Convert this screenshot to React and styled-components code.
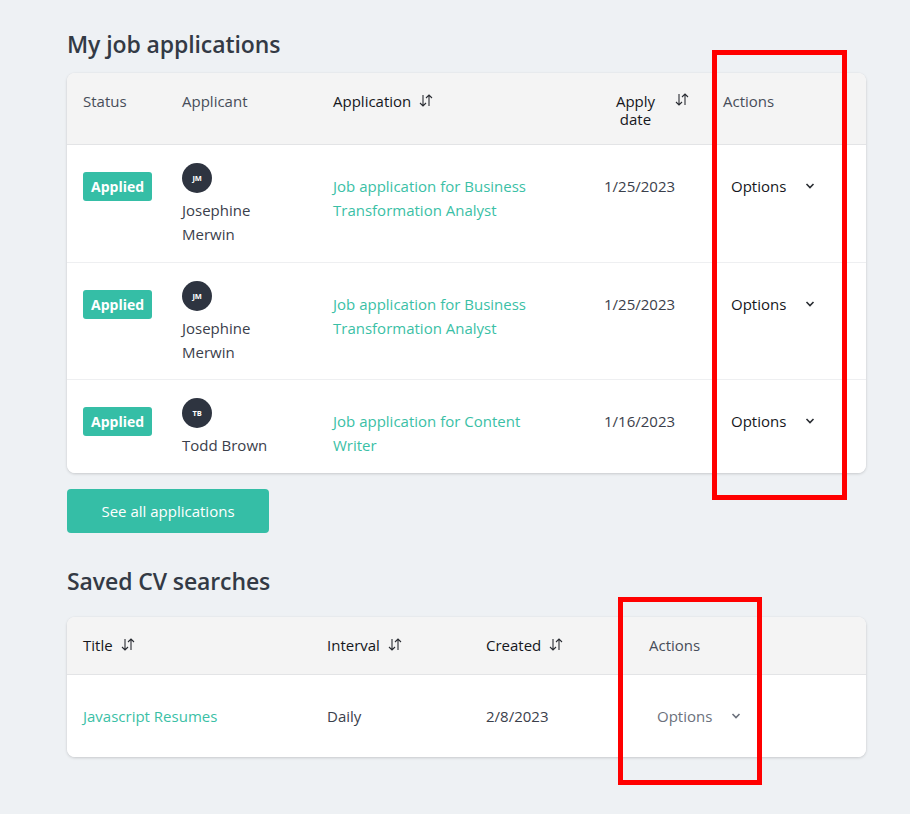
import React from "react";
import styled, { createGlobalStyle } from "styled-components";

const GlobalStyle = createGlobalStyle`
  html, body { margin: 0; padding: 0; background: #eef1f4; }
  body { font-family: "Open Sans", "Noto Sans", sans-serif; color: #3b404b; }
  * { box-sizing: border-box; }
`;

const Page = styled.div`
  position: relative;
  width: 910px;
  min-height: 814px;
  padding: 28px 0 0 67px;
`;

const Content = styled.div`
  width: 799px;
  display: flex;
  flex-direction: column;
`;

const Heading = styled.h2`
  margin: ${(p) => p.$mt || 0}px 0 ${(p) => p.$mb}px;
  font-size: 23px;
  line-height: 32px;
  font-weight: 600;
  color: #333a45;
  letter-spacing: -0.1px;
`;

const Card = styled.div`
  background: #fff;
  border-radius: 8px;
  box-shadow: 0 1px 3px rgba(0, 0, 0, 0.16), 0 0 1px rgba(0, 0, 0, 0.08);
  overflow: hidden;
`;

const Row = styled.div`
  display: grid;
  grid-template-columns: ${(p) => p.$cols};
  align-items: start;
  padding: ${(p) => p.$pad};
  background: ${(p) => (p.$head ? "#f4f4f4" : "#fff")};
  border-bottom: ${(p) => (p.$last ? "none" : `1px solid ${p.$head ? "#e3e4e6" : "#eeeff1"}`)};
`;

const Cell = styled.div`
  padding-left: 16px;
  margin-top: ${(p) => p.$mt || 0}px;
  font-size: 15px;
  line-height: 24px;
  display: flex;
  flex-direction: ${(p) => (p.$col ? "column" : "row")};
  align-items: flex-start;
`;

const HeadLabel = styled.span`
  font-size: 15px;
  line-height: 24px;
  color: ${(p) => (p.$dark ? "#15171c" : "#474d59")};
`;

const DateLabel = styled.span`
  width: 63px;
  text-align: center;
  font-size: 15px;
  line-height: 18px;
  margin-top: 3px;
  color: #15171c;
`;

const SortBox = styled.span`
  display: inline-flex;
  margin-left: ${(p) => p.$ml ?? 8}px;
  margin-top: ${(p) => p.$mt ?? 5}px;
  color: #2a2d33;
`;

const Badge = styled.span`
  display: inline-block;
  background: #35bea6;
  color: #fff;
  font-weight: 700;
  font-size: 14px;
  line-height: 29px;
  height: 29px;
  padding: 0 8px;
  border-radius: 3px;
`;

const Avatar = styled.span`
  width: 30px;
  height: 30px;
  border-radius: 50%;
  background: #2e3440;
  color: #fff;
  font-size: 7.5px;
  font-weight: 700;
  display: flex;
  align-items: center;
  justify-content: center;
  letter-spacing: -0.3px;
`;

const Name = styled.span`
  margin-top: 5px;
  color: #3b404b;
`;

const Link = styled.a`
  color: #3bbfa6;
  text-decoration: none;
`;

const Plain = styled.span`
  color: ${(p) => p.$c || "#3b404b"};
`;

const Options = styled.button`
  border: none;
  background: none;
  padding: 0 0 0 8px;
  font: inherit;
  font-size: 15px;
  line-height: 24px;
  color: ${(p) => (p.$muted ? "#6c717c" : "#15171c")};
  display: inline-flex;
  align-items: center;
  gap: 19px;
  cursor: pointer;
`;

const Button = styled.button`
  align-self: flex-start;
  margin-top: 16px;
  height: 44px;
  width: 202px;
  border: none;
  border-radius: 4px;
  background: #35bea6;
  color: #fff;
  font-family: inherit;
  font-size: 15px;
`;

const RedBox = styled.div`
  position: absolute;
  border: 5px solid #ff0000;
  pointer-events: none;
`;

const SortIcon = () => (
  <svg width="14" height="13" viewBox="0 0 14 13" fill="none" stroke="currentColor" strokeWidth="1.1">
    <path d="M4 1v11M1 9l3 3 3-3" />
    <path d="M10 12V1M7 4l3-3 3 3" />
  </svg>
);

const Chevron = ({ color }) => (
  <svg width="10" height="6" viewBox="0 0 10 6" fill="none" stroke={color} strokeWidth="1.6">
    <path d="M1.5 1l3.5 3.5L8.5 1" />
  </svg>
);

const jobCols = "99px 151px 271px 119px 1fr";
const apps = [
  { initials: "JM", name: ["Josephine", "Merwin"], job: ["Job application for Business", "Transformation Analyst"], date: "1/25/2023" },
  { initials: "JM", name: ["Josephine", "Merwin"], job: ["Job application for Business", "Transformation Analyst"], date: "1/25/2023" },
  { initials: "TB", name: ["Todd Brown"], job: ["Job application for Content", "Writer"], date: "1/16/2023" },
];

const cvCols = "244px 159px 163px 1fr";

export default function App() {
  return (
    <>
      <GlobalStyle />
      <Page>
        <Content>
          <Heading $mb={13}>My job applications</Heading>
          <Card>
            <Row $head $cols={jobCols} $pad="16px 0 0" style={{ height: 72 }}>
              <Cell><HeadLabel>Status</HeadLabel></Cell>
              <Cell><HeadLabel>Applicant</HeadLabel></Cell>
              <Cell><HeadLabel $dark>Application</HeadLabel><SortBox><SortIcon /></SortBox></Cell>
              <Cell><DateLabel>Apply date</DateLabel><SortBox $ml={8} $mt={4}><SortIcon /></SortBox></Cell>
              <Cell><HeadLabel>Actions</HeadLabel></Cell>
            </Row>
            {apps.map((a, i) => (
              <Row key={i} $cols={jobCols} $pad="18px 0 15.5px" $last={i === apps.length - 1}>
                <Cell $mt={9}><Badge>Applied</Badge></Cell>
                <Cell $col>
                  <Avatar>{a.initials}</Avatar>
                  <Name>
                    {a.name.map((n, k) => (
                      <React.Fragment key={k}>{k > 0 && <br />}{n}</React.Fragment>
                    ))}
                  </Name>
                </Cell>
                <Cell $mt={11}>
                  <Link href="#">{a.job[0]}<br />{a.job[1]}</Link>
                </Cell>
                <Cell $mt={11}><Plain>{a.date}</Plain></Cell>
                <Cell $mt={11}>
                  <Options>Options<Chevron color="#2a2d33" /></Options>
                </Cell>
              </Row>
            ))}
          </Card>
          <Button>See all applications</Button>
          <Heading $mt={32} $mb={20}>Saved CV searches</Heading>
          <Card>
            <Row $head $cols={cvCols} $pad="16px 0 17px">
              <Cell><HeadLabel $dark>Title</HeadLabel><SortBox><SortIcon /></SortBox></Cell>
              <Cell><HeadLabel $dark>Interval</HeadLabel><SortBox><SortIcon /></SortBox></Cell>
              <Cell><HeadLabel $dark>Created</HeadLabel><SortBox><SortIcon /></SortBox></Cell>
              <Cell><HeadLabel>Actions</HeadLabel></Cell>
            </Row>
            <Row $cols={cvCols} $pad="29px 0" $last>
              <Cell><Link href="#">Javascript Resumes</Link></Cell>
              <Cell><Plain>Daily</Plain></Cell>
              <Cell><Plain>2/8/2023</Plain></Cell>
              <Cell><Options $muted>Options<Chevron color="#6c717c" /></Options></Cell>
            </Row>
          </Card>
        </Content>
        <RedBox style={{ left: 712, top: 50, width: 135, height: 450 }} />
        <RedBox style={{ left: 618, top: 597, width: 144, height: 188 }} />
      </Page>
    </>
  );
}
